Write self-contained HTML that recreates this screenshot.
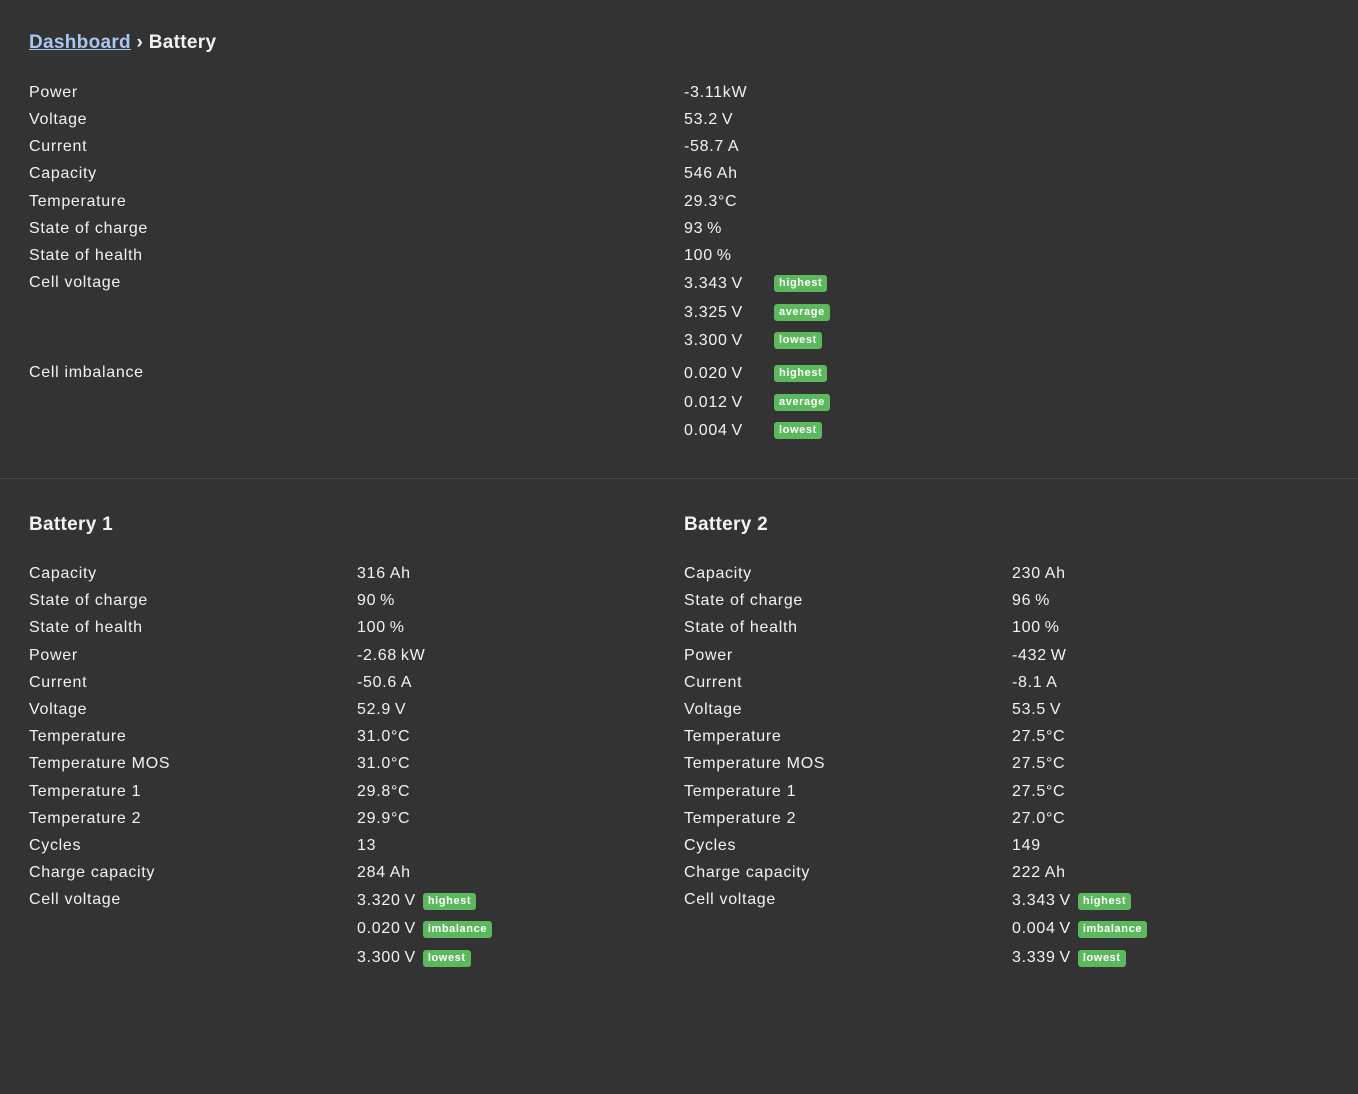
<!DOCTYPE html>
<html><head><meta charset="utf-8"><style>
body{margin:0;background:#333;width:1358px;height:1094px;position:relative;font-family:"Liberation Sans",sans-serif;color:#f2f2f2;font-size:16px;overflow:hidden;letter-spacing:0.7px}
.t{position:absolute;line-height:20px;white-space:nowrap}
.h{font-size:19px;font-weight:bold;letter-spacing:0.3px}
.b{display:inline-block;background:#5cb85c;color:#fff;font-size:11px;font-weight:bold;padding:0 5px;line-height:17px;border-radius:3px;vertical-align:1px;letter-spacing:0.6px;margin-left:3px}
a{color:#a9c8f0;text-decoration:underline}
</style></head><body>
<div class="t h" style="left:29px;top:33px"><a>Dashboard</a> › Battery</div>
<div class="t" style="left:29px;top:83px">Power</div><div class="t" style="left:684px;top:83px">-3.11kW</div>
<div class="t" style="left:29px;top:110px">Voltage</div><div class="t" style="left:684px;top:110px">53.2&#8201;V</div>
<div class="t" style="left:29px;top:137px">Current</div><div class="t" style="left:684px;top:137px">-58.7&#8201;A</div>
<div class="t" style="left:29px;top:164px">Capacity</div><div class="t" style="left:684px;top:164px">546&#8201;Ah</div>
<div class="t" style="left:29px;top:192px">Temperature</div><div class="t" style="left:684px;top:192px">29.3°C</div>
<div class="t" style="left:29px;top:219px">State of charge</div><div class="t" style="left:684px;top:219px">93&#8201;%</div>
<div class="t" style="left:29px;top:246px">State of health</div><div class="t" style="left:684px;top:246px">100&#8201;%</div>
<div class="t" style="left:29px;top:273px">Cell voltage</div>
<div class="t" style="left:684px;top:274px">3.343&#8201;V</div><div class="t" style="left:771px;top:273px"><span class="b">highest</span></div>
<div class="t" style="left:684px;top:303px">3.325&#8201;V</div><div class="t" style="left:771px;top:302px"><span class="b">average</span></div>
<div class="t" style="left:684px;top:331px">3.300&#8201;V</div><div class="t" style="left:771px;top:330px"><span class="b">lowest</span></div>
<div class="t" style="left:29px;top:363px">Cell imbalance</div>
<div class="t" style="left:684px;top:364px">0.020&#8201;V</div><div class="t" style="left:771px;top:363px"><span class="b">highest</span></div>
<div class="t" style="left:684px;top:393px">0.012&#8201;V</div><div class="t" style="left:771px;top:392px"><span class="b">average</span></div>
<div class="t" style="left:684px;top:421px">0.004&#8201;V</div><div class="t" style="left:771px;top:420px"><span class="b">lowest</span></div>
<div style="position:absolute;left:0;right:0;top:478px;border-top:1px solid #4a4a4a"></div>

<div class="t h" style="left:29px;top:515px">Battery 1</div>
<div class="t h" style="left:684px;top:515px">Battery 2</div>

<div class="t" style="left:29px;top:560px;line-height:27.2px">Capacity<br>State of charge<br>State of health<br>Power<br>Current<br>Voltage<br>Temperature<br>Temperature MOS<br>Temperature 1<br>Temperature 2<br>Cycles<br>Charge capacity<br>Cell voltage</div>
<div class="t" style="left:357px;top:560px;line-height:27.2px">316&#8201;Ah<br>90&#8201;%<br>100&#8201;%<br>-2.68&#8201;kW<br>-50.6&#8201;A<br>52.9&#8201;V<br>31.0°C<br>31.0°C<br>29.8°C<br>29.9°C<br>13<br>284&#8201;Ah</div>
<div class="t" style="left:357px;top:891px">3.320&#8201;V<span class="b" style="margin-left:7px">highest</span></div>
<div class="t" style="left:357px;top:919px">0.020&#8201;V<span class="b" style="margin-left:7px">imbalance</span></div>
<div class="t" style="left:357px;top:948px">3.300&#8201;V<span class="b" style="margin-left:7px">lowest</span></div>

<div class="t" style="left:684px;top:560px;line-height:27.2px">Capacity<br>State of charge<br>State of health<br>Power<br>Current<br>Voltage<br>Temperature<br>Temperature MOS<br>Temperature 1<br>Temperature 2<br>Cycles<br>Charge capacity<br>Cell voltage</div>
<div class="t" style="left:1012px;top:560px;line-height:27.2px">230&#8201;Ah<br>96&#8201;%<br>100&#8201;%<br>-432&#8201;W<br>-8.1&#8201;A<br>53.5&#8201;V<br>27.5°C<br>27.5°C<br>27.5°C<br>27.0°C<br>149<br>222&#8201;Ah</div>
<div class="t" style="left:1012px;top:891px">3.343&#8201;V<span class="b" style="margin-left:7px">highest</span></div>
<div class="t" style="left:1012px;top:919px">0.004&#8201;V<span class="b" style="margin-left:7px">imbalance</span></div>
<div class="t" style="left:1012px;top:948px">3.339&#8201;V<span class="b" style="margin-left:7px">lowest</span></div>
</body></html>
